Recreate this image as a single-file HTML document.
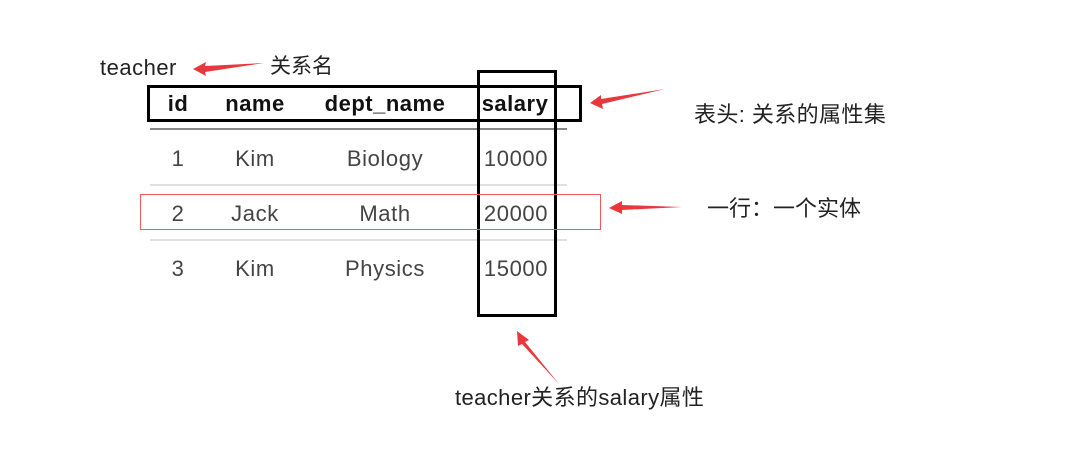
<!DOCTYPE html>
<html><head><meta charset="utf-8"><style>
html,body{margin:0;padding:0;background:#fff;width:1080px;height:453px;overflow:hidden;position:relative}
.t{position:absolute;font-family:"Liberation Sans","Noto Sans CJK SC",sans-serif;font-size:22px;line-height:26px;white-space:nowrap;color:#222}
.c{transform:translateX(-50%);color:#444;letter-spacing:0.6px}
.h{transform:translateX(-50%);font-weight:bold;color:#111;letter-spacing:0.5px}
.b{position:absolute;box-sizing:border-box}
</style></head><body>
<div class="t" style="left:100px;top:55px;letter-spacing:0.5px">teacher</div>
<div class="t" style="left:270px;top:54px;font-size:21px">关系名</div>

<div class="b" style="left:150px;top:128px;width:417px;height:2px;background:#888"></div>
<div class="b" style="left:150px;top:184px;width:417px;height:2px;background:#e0e0e0"></div>
<div class="b" style="left:150px;top:239px;width:417px;height:2px;background:#e0e0e0"></div>

<div class="t h" style="left:178px;top:91px">id</div>
<div class="t h" style="left:255px;top:91px">name</div>
<div class="t h" style="left:385px;top:91px">dept_name</div>
<div class="t h" style="left:515px;top:91px">salary</div>

<div class="t c" style="left:178px;top:146px">1</div>
<div class="t c" style="left:255px;top:146px">Kim</div>
<div class="t c" style="left:385px;top:146px">Biology</div>
<div class="t c" style="left:516px;top:146px">10000</div>
<div class="t c" style="left:178px;top:201px">2</div>
<div class="t c" style="left:255px;top:201px">Jack</div>
<div class="t c" style="left:385px;top:201px">Math</div>
<div class="t c" style="left:516px;top:201px">20000</div>
<div class="t c" style="left:178px;top:256px">3</div>
<div class="t c" style="left:255px;top:256px">Kim</div>
<div class="t c" style="left:385px;top:256px">Physics</div>
<div class="t c" style="left:516px;top:256px">15000</div>

<div class="b" style="left:147px;top:85px;width:435px;height:37px;border:3px solid #000"></div>
<div class="b" style="left:477px;top:70px;width:80px;height:247px;border:3px solid #000"></div>
<div class="b" style="left:140px;top:194px;width:461px;height:36px;border:1px solid #f05a5a"></div>

<svg width="1080" height="453" style="position:absolute;left:0;top:0">
<g fill="#e8383d">
<polygon points="193,69 206,62 205,66 264,63 205,72 206,76"/>
<polygon points="590,103 601,95 601,99 665,89 602,104 603,109"/>
<polygon points="609,208 622,201 622,205 682,207 622,210 622,214"/>
<polygon points="517,331 529,340 525,342 559,384 522,344 518,346"/>
</g>
</svg>

<div class="t" style="left:694px;top:102px;letter-spacing:0.4px">表头: 关系的属性集</div>
<div class="t" style="left:707px;top:196px">一行：一个实体</div>
<div class="t" style="left:455px;top:385px;letter-spacing:0.4px">teacher关系的salary属性</div>
</body></html>
